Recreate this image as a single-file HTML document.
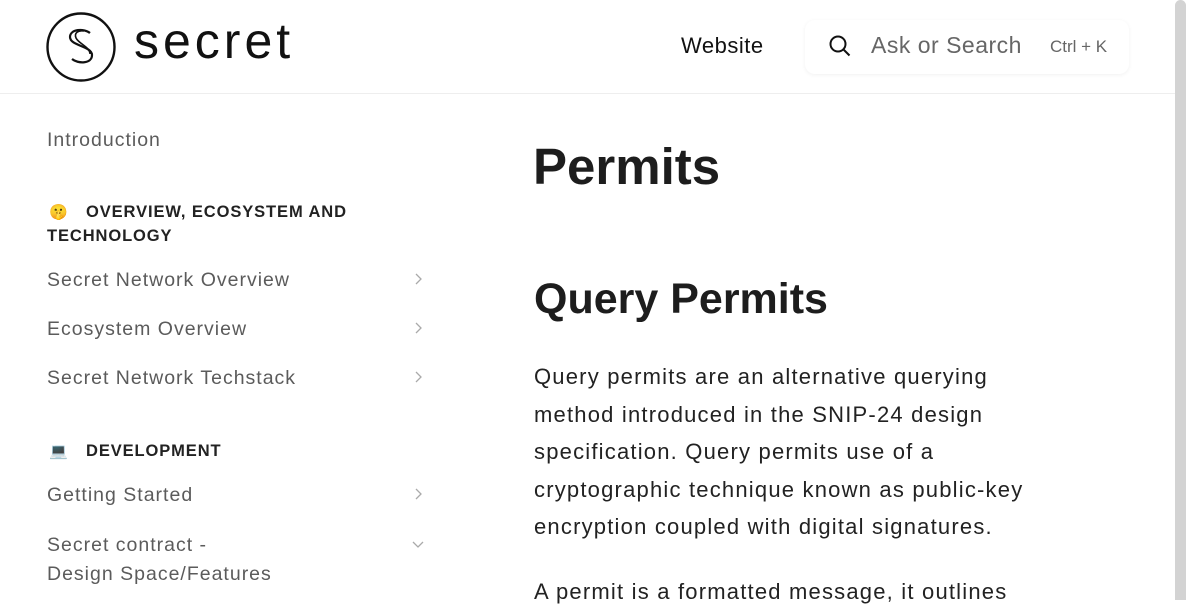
<!DOCTYPE html>
<html><head><meta charset="utf-8"><style>
*{margin:0;padding:0;box-sizing:border-box}
body{width:1186px;height:600px;overflow:hidden;background:#fff;font-family:"Liberation Sans",sans-serif;position:relative;color:#1d1d1d}
.hdr{position:absolute;left:0;top:0;width:1175px;height:94px;border-bottom:1px solid #eee;background:#fff}
.sb{position:absolute;right:0;top:0;width:11px;height:600px;background:#d3d3d3;border-radius:6px 6px 0 0}
.t{position:absolute;white-space:nowrap}
.nav{font-size:19.5px;color:#5b5b5b;letter-spacing:1px}
.sec{font-size:16.5px;font-weight:bold;color:#222;letter-spacing:.9px;line-height:24px}
.chev{position:absolute;left:412px;width:12px;height:12px}
.p{font-size:22px;line-height:37.6px;color:#222;left:534px;width:560px;letter-spacing:1.2px}
</style></head><body>
<div class="hdr">
<svg style="position:absolute;left:46px;top:12px" width="70" height="70" viewBox="0 0 70 70"><circle cx="35" cy="35" r="33.5" fill="none" stroke="#111" stroke-width="2.4"/>
<path d="M44 21c-6-5-20-4-20 4 0 9 22 9 22 18 0 9-14 9-20 4" fill="none" stroke="#111" stroke-width="2.2"/>
<path d="M38 19c-6-1-10 2-8 7 3 6 14 9 14 16" fill="none" stroke="#111" stroke-width="1.6"/></svg>
<div class="t" style="left:134px;top:12px;font-size:50px;color:#111;letter-spacing:4px">secret</div>
<div class="t" style="left:681px;top:33px;font-size:22px;color:#111;letter-spacing:.5px">Website</div>
<div style="position:absolute;left:805px;top:20px;width:324px;height:54px;border-radius:10px;box-shadow:0 1px 4px rgba(0,0,0,.06)"></div>
<svg style="position:absolute;left:828px;top:34px" width="24" height="24" viewBox="0 0 24 24"><circle cx="10" cy="10" r="7.5" fill="none" stroke="#111" stroke-width="2"/><path d="M15.5 15.5l6 6" stroke="#111" stroke-width="2"/></svg>
<div class="t" style="left:871px;top:32px;font-size:23px;color:#666;letter-spacing:.5px">Ask or Search</div>
<div class="t" style="left:1050px;top:37px;font-size:17px;color:#666">Ctrl + K</div>
</div>
<div class="sb"></div>
<div class="t nav" style="left:47px;top:129px">Introduction</div>
<div class="t" style="left:49px;top:203px;font-size:15px">🤫</div>
<div class="t sec" style="left:86px;top:200px">OVERVIEW, ECOSYSTEM AND</div>
<div class="t sec" style="left:47px;top:224px">TECHNOLOGY</div>
<div class="t nav" style="left:47px;top:269px">Secret Network Overview</div>
<div class="t nav" style="left:47px;top:318px">Ecosystem Overview</div>
<div class="t nav" style="left:47px;top:367px">Secret Network Techstack</div>
<div class="t" style="left:49px;top:442px;font-size:15px">💻</div>
<div class="t sec" style="left:86px;top:439px">DEVELOPMENT</div>
<div class="t nav" style="left:47px;top:484px">Getting Started</div>
<div class="t nav" style="left:47px;top:534px">Secret contract -</div>
<div class="t nav" style="left:47px;top:563px">Design Space/Features</div>
<svg class="chev" style="top:273px" viewBox="0 0 12 12"><path d="M4 1l5 5-5 5" fill="none" stroke="#aaa" stroke-width="1.3"/></svg>
<svg class="chev" style="top:322px" viewBox="0 0 12 12"><path d="M4 1l5 5-5 5" fill="none" stroke="#aaa" stroke-width="1.3"/></svg>
<svg class="chev" style="top:371px" viewBox="0 0 12 12"><path d="M4 1l5 5-5 5" fill="none" stroke="#aaa" stroke-width="1.3"/></svg>
<svg class="chev" style="top:488px" viewBox="0 0 12 12"><path d="M4 1l5 5-5 5" fill="none" stroke="#aaa" stroke-width="1.3"/></svg>
<svg class="chev" style="top:538px" viewBox="0 0 12 12"><path d="M1 4l5 5 5-5" fill="none" stroke="#aaa" stroke-width="1.3"/></svg>
<div class="t" style="left:533px;top:137px;font-size:51px;font-weight:bold;color:#1d1d1d">Permits</div>
<div class="t" style="left:534px;top:275px;font-size:43px;font-weight:bold;color:#1d1d1d">Query Permits</div>
<div class="t p" style="top:358px;white-space:normal">Query permits are an alternative querying<br>method introduced in the SNIP-24 design<br>specification. Query permits use of a<br>cryptographic technique known as public-key<br>encryption coupled with digital signatures.</div>
<div class="t p" style="top:573px">A permit is a formatted message, it outlines</div>
</body></html>
